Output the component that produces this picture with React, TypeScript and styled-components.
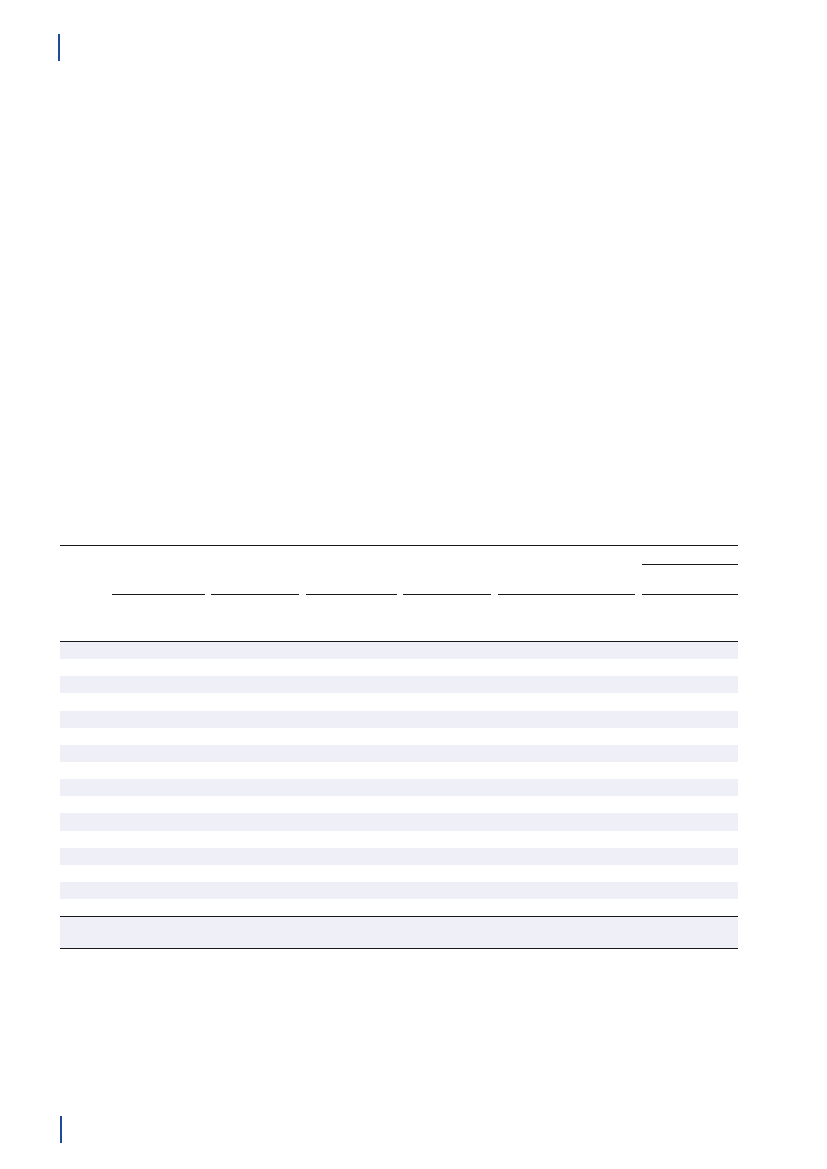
import React from "react";
import styled, { createGlobalStyle } from "styled-components";

const GlobalStyle = createGlobalStyle`
  html, body {
    margin: 0;
    padding: 0;
    background: #ffffff;
    font-family: "Liberation Sans", Arial, sans-serif;
  }
`;

const COLUMNS = "98px 53px 88px 49px 55px 88px 53px 97px 48px 49px";
const RULE = "#18181b";
const STRIPE = "#eeeff7";

const Page = styled.div`
  width: 827px;
  height: 1169px;
  display: flex;
  flex-direction: column;
  box-sizing: border-box;
  padding-top: 34px;
`;

const Marker = styled.div<{ $left: number }>`
  width: 1.5px;
  height: 27px;
  margin-left: ${(p) => p.$left}px;
  background: #1f4a96;
  flex: none;
`;

const Table = styled.div`
  margin-top: 484px;
  margin-left: 60px;
  width: 678px;
`;

const Head = styled.div`
  display: grid;
  grid-template-columns: ${COLUMNS};
  grid-template-rows: 19px 30px 46px;
  border-top: 1px solid ${RULE};
  border-bottom: 1px solid ${RULE};
`;

const GroupLine = styled.div<{ $col: string; $row: number; $ml?: number; $mr?: number }>`
  grid-column: ${(p) => p.$col};
  grid-row: ${(p) => p.$row};
  align-self: end;
  height: 0;
  margin-left: ${(p) => p.$ml ?? 0}px;
  margin-right: ${(p) => p.$mr ?? 0}px;
  border-bottom: 1px solid ${RULE};
`;

const Body = styled.div`
  display: flex;
  flex-direction: column;
`;

const Row = styled.div<{ $shaded: boolean }>`
  display: grid;
  grid-template-columns: ${COLUMNS};
  height: 17.15px;
  background: ${(p) => (p.$shaded ? STRIPE : "transparent")};
`;

const TotalRow = styled.div`
  display: grid;
  grid-template-columns: ${COLUMNS};
  height: 30.6px;
  background: ${STRIPE};
  border-top: 1px solid ${RULE};
  border-bottom: 1px solid ${RULE};
`;

const Spacer = styled.div`
  flex: 1;
`;

const BottomMark = styled(Marker)`
  margin-bottom: 26px;
`;

const rows = Array.from({ length: 16 }, (_, i) => i);

export default function App() {
  return (
    <>
      <GlobalStyle />
      <Page>
        <Marker $left={58} />
        <Table>
          <Head>
            <GroupLine $col="9 / 11" $row={1} $ml={1} />
            <GroupLine $col="1 / 3" $row={2} $ml={52} $mr={6} />
            <GroupLine $col="3 / 4" $row={2} />
            <GroupLine $col="4 / 6" $row={2} $ml={7} $mr={6} />
            <GroupLine $col="6 / 7" $row={2} />
            <GroupLine $col="7 / 9" $row={2} $ml={7} $mr={6} />
            <GroupLine $col="9 / 11" $row={2} $ml={1} />
          </Head>
          <Body>
            {rows.map((i) => (
              <Row key={i} $shaded={i % 2 === 0} />
            ))}
          </Body>
          <TotalRow />
        </Table>
        <Spacer />
        <BottomMark $left={60} />
      </Page>
    </>
  );
}
